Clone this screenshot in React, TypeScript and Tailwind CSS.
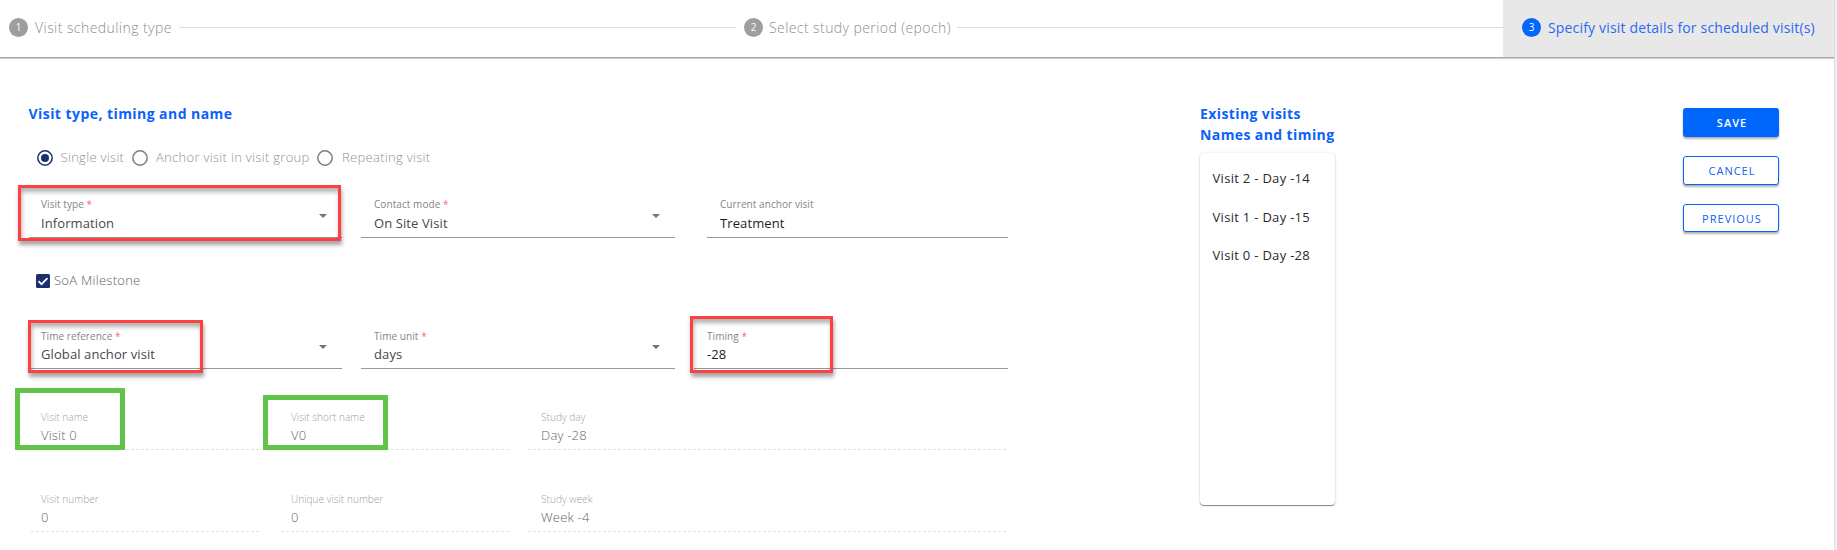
import React from 'react';

type FieldProps = {
  label: string;
  value: string;
  required?: boolean;
  caret?: boolean;
  dark?: boolean;
  disabled?: boolean;
  compact?: boolean;
  className: string;
  children?: React.ReactNode;
};

function Field({ label, value, required, caret, dark, disabled, compact, className, children }: FieldProps) {
  return (
    <div
      className={`relative flex h-[46px] shrink-0 justify-between ${disabled ? '' : 'border-b border-[#979797]'} ${disabled || compact ? 'pt-[4px]' : 'pt-[3px]'} ${className}`}
    >
      <div className="flex flex-col">
        <span
          className={`shrink-0 whitespace-nowrap text-[10px] leading-[18px] tracking-[0.07px] ${disabled || compact ? 'h-[17px]' : 'h-[18px]'} ${disabled ? 'text-[#a0a0a0]' : 'text-[#858585]'}`}
        >
          {label}
          {required && <span className="text-[#ff6b6b]"> *</span>}
        </span>
        <span
          className={`h-[20px] shrink-0 whitespace-nowrap text-[13px] leading-[20px] ${disabled ? 'tracking-[0.2px] text-[#666666]' : dark ? 'tracking-[0.1px] text-[#1c1c1c]' : 'tracking-[0.1px] text-[#484848]'}`}
        >
          {value}
        </span>
      </div>
      {caret && (
        <svg className={`mr-[15px] h-[4px] w-[8px] shrink-0 ${compact ? 'mt-[18px]' : 'mt-[19px]'}`} viewBox="0 0 8 4">
          <path d="M0 0h8L4 4z" fill="#757575" />
        </svg>
      )}
      {disabled && (
        <svg className="absolute bottom-0 left-0 h-px w-full">
          <line x1="0" y1="0.5" x2="100%" y2="0.5" stroke="#e2e2e2" strokeDasharray="3 2" />
        </svg>
      )}
      {children}
    </div>
  );
}

function StepBadge({ n, active }: { n: number; active?: boolean }) {
  return (
    <span
      className={`flex size-[19px] shrink-0 items-center justify-center rounded-full text-[10px] leading-none font-normal text-white ${active ? 'bg-[#0067fb]' : 'bg-[#9e9e9e]'}`}
    >
      {n}
    </span>
  );
}

function Radio({ checked }: { checked?: boolean }) {
  return (
    <svg className="size-[16px] shrink-0" viewBox="0 0 16 16">
      <circle cx="8" cy="8" r="7.2" fill="none" stroke={checked ? '#1a2f6e' : '#7d7d7d'} strokeWidth="1.5" />
      {checked && <circle cx="8" cy="8" r="4" fill="#1a2f6e" />}
    </svg>
  );
}

const redBox = 'absolute border-[3px] border-[#fd4141] shadow-[1px_4px_4px_rgba(0,0,0,0.35),inset_1px_4px_4px_rgba(0,0,0,0.3)]';
const greenBox = 'absolute border-[5px] border-[#5fc447]';

export default function App() {
  return (
    <div className="flex h-[550px] w-[1837px] overflow-hidden bg-[#edf1fa] font-['Open_Sans',sans-serif]">
      <div className="flex h-full w-[1834px] flex-col bg-white shadow-[0_0_2px_rgba(0,0,0,0.2)]">
        <header className="flex h-[58px] shrink-0 items-center border-b border-[#a6a6a6] pb-[3px] text-[14px] font-light text-[#8e8e8e] shadow-[0_1px_1px_rgba(0,0,0,0.18)]">
          <div className="flex w-[179px] items-center gap-[7px] pl-[9px]">
            <StepBadge n={1} />
            <span className="whitespace-nowrap tracking-[0.44px]">Visit scheduling type</span>
          </div>
          <div className="mt-px h-px w-[557px] bg-[#dedede]" />
          <div className="flex w-[221px] items-center gap-[6px] pl-[8px]">
            <StepBadge n={2} />
            <span className="whitespace-nowrap tracking-[0.42px]">Select study period (epoch)</span>
          </div>
          <div className="mt-px h-px w-[546px] bg-[#dedede]" />
          <div className="-mb-[3px] flex h-[57px] w-[331px] items-center gap-[7px] bg-[#e8e8e8] pb-[3px] pl-[19px] font-normal text-[#2b68f2]">
            <StepBadge n={3} active />
            <span className="whitespace-nowrap tracking-[0.17px]">Specify visit details for scheduled visit(s)</span>
          </div>
        </header>

        <main className="flex flex-1">
          <section className="flex w-[1200px] flex-col pt-[46px]">
            <h2 className="h-[20px] pl-[28.5px] text-[14px] leading-[20px] font-bold tracking-[0.44px] whitespace-nowrap text-[#0b62f8]">
              Visit type, timing and name
            </h2>
            <div className="mt-[24px] flex h-[20px] items-center pl-[36.5px] text-[13px] font-light tracking-[0.3px] whitespace-nowrap text-[#929292]">
              <Radio checked />
              <span className="ml-[8px] w-[71.5px]">Single visit</span>
              <Radio />
              <span className="ml-[8px] w-[161px]">Anchor visit in visit group</span>
              <Radio />
              <span className="ml-[9px]">Repeating visit</span>
            </div>

            <div className="mt-[24px] flex h-[46px] pl-[29px]">
              <Field label="Visit type" value="Information" required caret className="w-[313px] pl-[12px]">
                <div className={`${redBox} -top-[7px] -left-[11px] h-[56px] w-[323px]`} />
              </Field>
              <Field label="Contact mode" value="On Site Visit" required caret className="ml-[19px] w-[314px] pl-[13px]" />
              <Field label="Current anchor visit" value="Treatment" dark className="ml-[32px] w-[301px] pl-[13px]" />
            </div>

            <div className="mt-[33px] flex h-[20px] items-center pl-[36px] text-[13px] font-light tracking-[0.27px] whitespace-nowrap text-[#606060]">
              <svg className="size-[14px]" viewBox="0 0 14 14">
                <rect width="14" height="14" rx="1.5" fill="#1a2f6e" />
                <path d="M2.5 7.2l3 3 6-6" fill="none" stroke="#fff" strokeWidth="1.7" />
              </svg>
              <span className="ml-[4px]">SoA Milestone</span>
            </div>

            <div className="mt-[32px] flex h-[46px] pl-[29px]">
              <Field label="Time reference" value="Global anchor visit" required caret compact className="w-[313px] pl-[12px]">
                <div className={`${redBox} -top-[3px] -left-px h-[53px] w-[175px]`} />
              </Field>
              <Field label="Time unit" value="days" required caret compact className="ml-[19px] w-[314px] pl-[13px]" />
              <Field label="Timing" value="-28" required dark compact className="ml-[19px] w-[314px] pl-[13px]">
                <div className={`${redBox} -top-[7px] -left-[4px] h-[57px] w-[143px]`} />
              </Field>
            </div>

            <div className="mt-[35px] flex h-[46px] pl-[31px] font-light">
              <Field label="Visit name" value="Visit 0" disabled className="w-[229px] pl-[10px]">
                <div className={`${greenBox} -top-[16px] -left-[16px] h-[62px] w-[110px]`} />
              </Field>
              <Field label="Visit short name" value="V0" disabled className="ml-[21px] w-[229px] pl-[10px]">
                <div className={`${greenBox} -top-[9px] -left-[18px] h-[55px] w-[125px]`} />
              </Field>
              <Field label="Study day" value="Day -28" disabled className="ml-[18px] w-[479px] pl-[13px]" />
            </div>

            <div className="mt-[36px] flex h-[46px] pl-[31px] font-light">
              <Field label="Visit number" value="0" disabled className="w-[229px] pl-[10px]" />
              <Field label="Unique visit number" value="0" disabled className="ml-[21px] w-[229px] pl-[10px]" />
              <Field label="Study week" value="Week -4" disabled className="ml-[18px] w-[479px] pl-[13px]" />
            </div>
          </section>

          <aside className="flex w-[135px] shrink-0 flex-col pt-[45px]">
            <h2 className="h-[50px] text-[14px] leading-[21px] font-bold tracking-[0.4px] whitespace-nowrap text-[#0b62f8]">
              Existing visits
              <br />
              Names and timing
            </h2>
            <ul className="flex h-[352px] flex-col gap-[18.6px] rounded-[4px] pt-[15px] pl-[12.5px] text-[13px] leading-[20px] tracking-[0.3px] whitespace-nowrap text-[#2a2a2a] shadow-[0_1px_1px_rgba(0,0,0,0.45),0_0_3px_rgba(0,0,0,0.12)]">
              <li>Visit 2 - Day -14</li>
              <li>Visit 1 - Day -15</li>
              <li>Visit 0 - Day -28</li>
            </ul>
          </aside>

          <div className="ml-[348px] flex w-[96px] flex-col gap-[19px] pt-[50px] text-[11px] tracking-[1px]">
            <button className="h-[29px] rounded-[3px] bg-[#0067fb] pt-px pl-[2px] font-semibold text-white shadow-[0_2px_2px_rgba(0,0,0,0.3)]">SAVE</button>
            <button className="h-[29px] rounded-[3px] border border-[#0067fb] bg-white pt-px pl-[2px] text-[#0b62f8] shadow-[0_2px_2px_rgba(0,0,0,0.3)]">CANCEL</button>
            <button className="h-[28px] rounded-[3px] border border-[#0067fb] bg-white pt-[2px] pl-[2px] text-[#0b62f8] shadow-[0_2px_2px_rgba(0,0,0,0.3)]">PREVIOUS</button>
          </div>
        </main>
      </div>
    </div>
  );
}
